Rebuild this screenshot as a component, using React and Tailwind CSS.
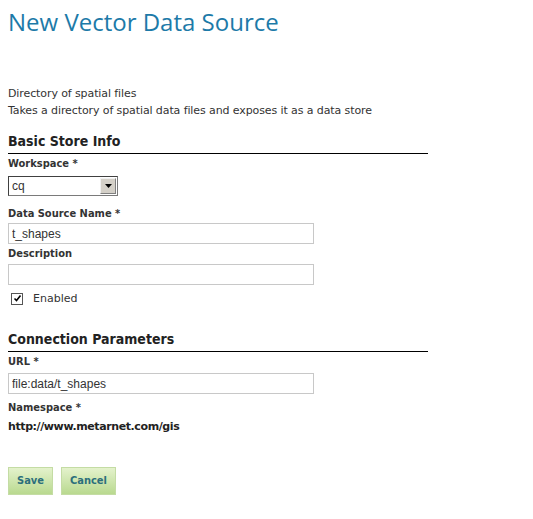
import React from 'react';

const Label = ({ children }) => (
  <div className="text-[11px] font-bold text-[#333] leading-[13px]">{children}</div>
);

const TextInput = ({ value }) => (
  <input
    type="text"
    defaultValue={value}
    className="block w-[306px] h-[21px] border border-[#c8c8c8] bg-white px-[3px] text-[12px] text-[#333] outline-none font-['Liberation_Sans',Arial,sans-serif]"
  />
);

const SectionTitle = ({ children }) => (
  <div className="w-[420px] border-b border-black pb-[3px] text-[14px] font-bold text-[#222] leading-[17px]">
    {children}
  </div>
);

export default function App() {
  return (
    <div className="min-h-[519px] bg-white px-2 pt-[7px] font-['DejaVu_Sans',Verdana,sans-serif] [font-stretch:condensed] text-[#333]">
      <h1 className="text-[24px] leading-[30px] text-[#1d7aa8] font-['Open_Sans',sans-serif] [font-stretch:normal]">
        New Vector Data Source
      </h1>

      <div className="mt-[48px] text-[11px] leading-[17px] [font-stretch:normal] tracking-[-0.1px]">
        <div>Directory of spatial files</div>
        <div>Takes a directory of spatial data files and exposes it as a data store</div>
      </div>

      <div className="mt-[14px]">
        <SectionTitle>Basic Store Info</SectionTitle>
      </div>

      <div className="mt-[3px]">
        <Label>Workspace *</Label>
        <div className="mt-[6px] flex h-[20px] w-[110px] items-center border border-[#7a7a7a] border-t-[#404040] border-l-[#404040] bg-white">
          <span className="flex-1 pl-[3px] text-[12px] leading-none font-['Liberation_Sans',Arial,sans-serif]">cq</span>
          <span className="flex h-[16px] w-[16px] items-center justify-center border border-[#f0f0f0] border-r-[#808080] border-b-[#808080] bg-[#d4d0c8] mr-[1px]">
            <svg width="7" height="4" viewBox="0 0 7 4"><path d="M0 0h7L3.5 4z" fill="#000" /></svg>
          </span>
        </div>
      </div>

      <div className="mt-[11px]">
        <Label>Data Source Name *</Label>
        <div className="mt-[3px]"><TextInput value="t_shapes" /></div>
      </div>

      <div className="mt-[3px]">
        <Label>Description</Label>
        <div className="mt-[4px]"><TextInput value="" /></div>
      </div>

      <div className="mt-[7px] flex items-center pl-[3px]">
        <span className="flex h-[12px] w-[12px] items-center justify-center border border-[#555] bg-white">
          <svg width="9" height="9" viewBox="0 0 9 9"><path d="M1.5 4.5l2 2 4-5" stroke="#000" strokeWidth="1.6" fill="none" /></svg>
        </span>
        <span className="ml-[10px] text-[11px] leading-[13px] [font-stretch:normal]">Enabled</span>
      </div>

      <div className="mt-[26px]">
        <SectionTitle>Connection Parameters</SectionTitle>
      </div>

      <div className="mt-[3px]">
        <Label>URL *</Label>
        <div className="mt-[5px]"><TextInput value="file:data/t_shapes" /></div>
      </div>

      <div className="mt-[7px]">
        <Label>Namespace *</Label>
        <div className="mt-[6px] text-[11px] font-bold leading-[13px] text-[#222] [font-stretch:normal] tracking-[-0.4px]">http://www.metarnet.com/gis</div>
      </div>

      <div className="mt-[34px] flex gap-2">
        <button className="h-[28px] px-[8px] border border-[#c4dca4] bg-gradient-to-b from-[#e4f2cc] to-[#b9d98f] text-[11px] font-bold text-[#2c6f7c]">
          Save
        </button>
        <button className="h-[28px] px-[8px] border border-[#c4dca4] bg-gradient-to-b from-[#e4f2cc] to-[#b9d98f] text-[11px] font-bold text-[#2c6f7c]">
          Cancel
        </button>
      </div>
    </div>
  );
}
